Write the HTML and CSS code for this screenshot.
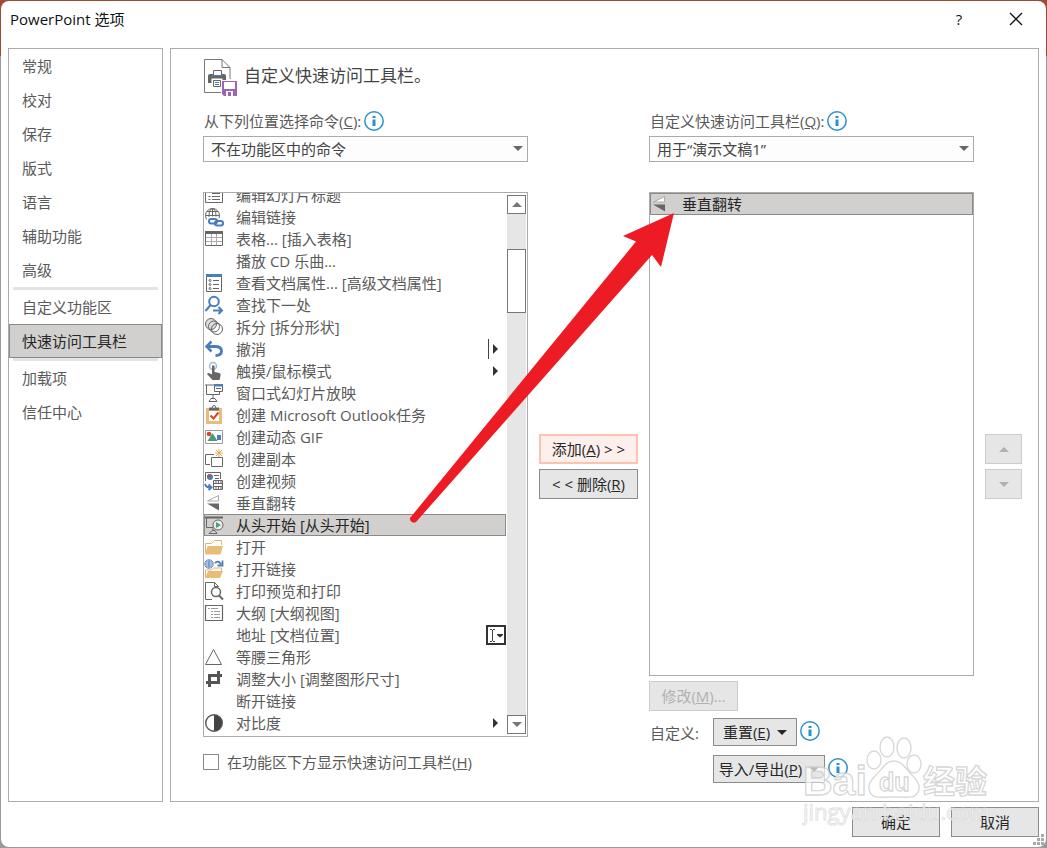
FILE: index.html
```html
<!DOCTYPE html>
<html lang="zh-CN">
<head>
    <meta charset="UTF-8">
    <meta name="viewport" content="width=device-width, initial-scale=1.0">
    <title>PowerPoint 选项</title>
    <link rel="stylesheet" href="styles.css">
</head>
<body>
    <div class="dialog">
        <header class="titlebar">
            <h1>PowerPoint 选项</h1>
            <button class="title-button" type="button" aria-label="帮助">?</button>
            <button class="title-button" type="button" aria-label="关闭">
                <svg width="14" height="14" viewBox="0 0 14 14"><path d="M1 1l12 12M13 1L1 13" stroke="#111" stroke-width="1.3"/></svg>
            </button>
        </header>

        <div class="content">
            <nav class="sidebar">
                <a href="#">常规</a>
                <a href="#">校对</a>
                <a href="#">保存</a>
                <a href="#">版式</a>
                <a href="#">语言</a>
                <a href="#">辅助功能</a>
                <a href="#">高级</a>
                <hr>
                <a href="#">自定义功能区</a>
                <a href="#" class="active">快速访问工具栏</a>
                <hr>
                <a href="#">加载项</a>
                <a href="#">信任中心</a>
            </nav>

            <main class="panel">
                <div class="panel-head">
                    <svg width="34" height="38" viewBox="0 0 34 38" fill="none">
                        <path d="M17 33.500H.5V.5H18l8 8V20" stroke="#777"/>
                        <path d="M18 .5v8h8" stroke="#777"/>
                        <path d="M4 17q0-2 2-2h14q2 0 2 2v7H4z" fill="#666"/>
                        <path d="M9.500 17v-5.500h8V17z" fill="#fff" stroke="#666"/>
                        <path d="M8 16.500h11" stroke="#4a7ebb"/>
                        <path d="M8.500 20.500h9v7h-9z" fill="#fff" stroke="#fff" stroke-width="2"/>
                        <path d="M9.500 21.500h7v6h-7z" fill="#fff" stroke="#666"/>
                        <path d="M11 23.500h4M11 25.500h4" stroke="#4a7ebb"/>
                        <path d="M17 21h17v17H17z" fill="#fff"/>
                        <path d="M18 22h15v15H20l-2-2z" fill="#9b64b8"/>
                        <path d="M20 23h11v7H20zM22 32h7v5h-7z" fill="#fff"/>
                        <path d="M24 33h3v4h-3z" fill="#9b64b8"/>
                    </svg>
                    <h2>自定义快速访问工具栏。</h2>
                </div>

                <div class="columns">
                    <div class="field">
                        <div class="field-label">
                            <label for="source">从下列位置选择命令(<u>C</u>):</label>
                            <svg class="info"><use href="#i-info"/></svg>
                        </div>
                        <div class="select">
                            <select id="source"><option>不在功能区中的命令</option></select>
                        </div>
                    </div>
                    <div class="field field-target">
                        <div class="field-label">
                            <label for="target">自定义快速访问工具栏(<u>Q</u>):</label>
                            <svg class="info"><use href="#i-info"/></svg>
                        </div>
                        <div class="select">
                            <select id="target"><option>用于“演示文稿1”</option></select>
                        </div>
                    </div>

                    <div class="source-col">
                        <div class="listbox">
                            <ul class="items scrolled" id="commands" role="listbox" aria-label="命令"></ul>
                            <div class="scrollbar">
                                <button type="button" aria-label="向上滚动"><i class="tri up"></i></button>
                                <div class="track"><div class="thumb"></div></div>
                                <button type="button" aria-label="向下滚动"><i class="tri down"></i></button>
                            </div>
                        </div>
                        <label class="check"><input type="checkbox"><span>在功能区下方显示快速访问工具栏(<u>H</u>)</span></label>
                    </div>

                    <div class="side">
                        <button class="btn primary" type="button">添加(<u>A</u>) &gt; &gt;</button>
                        <button class="btn" type="button">&lt; &lt; 删除(<u>R</u>)</button>
                    </div>

                    <div class="target-col">
                        <div class="listbox">
                            <ul class="items" role="listbox" aria-label="工具栏">
                                <li class="selected" role="option" aria-selected="true"><svg><use href="#i-flip"/></svg><span>垂直翻转</span></li>
                            </ul>
                        </div>
                        <button class="btn modify" type="button" disabled>修改(<u>M</u>)...</button>
                        <div class="custom">
                            <span class="custom-label">自定义:</span>
                            <button class="btn menu" type="button"><span>重置(<u>E</u>)</span><i class="tri down"></i></button>
                            <svg class="info"><use href="#i-info"/></svg>
                            <div class="export">
                                <button class="btn menu" type="button"><span>导入/导出(<u>P</u>)</span><i class="tri down"></i></button>
                                <svg class="info"><use href="#i-info"/></svg>
                            </div>
                        </div>
                    </div>

                    <div class="side">
                        <button class="btn" type="button" disabled aria-label="上移"><i class="tri up"></i></button>
                        <button class="btn" type="button" disabled aria-label="下移"><i class="tri down"></i></button>
                    </div>
                </div>
            </main>
        </div>

        <footer class="footer">
            <button class="btn" type="button">确定</button>
            <button class="btn" type="button">取消</button>
        </footer>

        <svg class="grip" width="11" height="11" viewBox="0 0 11 11"><path d="M8 0h3v3H8zM4 4h3v3H4zM8 4h3v3H8zM0 8h3v3H0zM4 8h3v3H4zM8 8h3v3H8z" fill="#aaa"/></svg>

        <!-- pointer from the command to its place in the toolbar -->
        <svg class="arrow" width="270" height="320" viewBox="0 0 270 320">
            <path d="M5 313L231 36.500 218 31l51-23-13 54-9-12L11 317a4 4 0 0 1-6-4z" fill="#ed1c24"/>
        </svg>

        <svg class="watermark" width="190" height="96" viewBox="0 0 190 96">
            <g fill="#fff" fill-opacity=".7" stroke="#c9c9c9" stroke-opacity=".75" stroke-width="1.300">
                <text x="1" y="62" class="wm-big">Bai</text>
                <ellipse cx="72" cy="27" rx="7" ry="9"/>
                <ellipse cx="85" cy="14" rx="7" ry="10"/>
                <ellipse cx="102" cy="15" rx="7" ry="10"/>
                <ellipse cx="112" cy="31" rx="7" ry="9"/>
                <path d="M92 28c9 0 12 9 18 14 6 6 9 11 6 17-3 7-10 5-24 5s-21 2-24-5c-3-6 0-11 6-17 6-5 9-14 18-14z"/>
                <text x="77" y="58" class="wm-du">du</text>
                <text x="121" y="60" class="wm-cn">经验</text>
            </g>
            <text x="1" y="87" class="wm-url" fill="#fff" fill-opacity=".8" stroke="#d4d4d4" stroke-opacity=".7">jingyan.baidu.com</text>
        </svg>
    </div>

    <svg class="sprite">
        <symbol id="i-info" viewBox="0 0 20 20">
            <circle cx="10" cy="10" r="9.200" fill="#fff" stroke="#2b90d0" stroke-width="1.500"/>
            <path d="M8.500 5h3v2h-3zM8.500 8.500h3V15h-3z" fill="#2b90d0" stroke="none"/>
        </symbol>
        <symbol id="i-title" viewBox="0 0 20 20">
            <path d="M1.500 5.500h17v12h-17zM8 8.500h8M8 11.500h8M8 14.500h8M4.500 11.500h2M4.500 14.500h2"/>
        </symbol>
        <symbol id="i-link" viewBox="0 0 20 20">
            <circle cx="8.500" cy="8.500" r="7"/><ellipse cx="8.500" cy="8.500" rx="3.500" ry="7"/><path d="M1.500 8.500h14M3 4.500h11M3 12.500h7M8.500 1.500v12"/>
            <g stroke="#fff" stroke-width="5"><rect x="5" y="12" width="8" height="4" rx="2"/><rect x="11" y="14" width="8" height="4" rx="2"/></g>
            <g stroke="#4a7ebb" stroke-width="2"><rect x="5" y="12" width="8" height="4.500" rx="2.200"/><rect x="11" y="14" width="8" height="4.500" rx="2.200"/></g>
        </symbol>
        <symbol id="i-table" viewBox="0 0 20 20">
            <path d="M7.500 4v12.500M12.500 4v12.500M1.500 8.500h17M1.500 12.500h17" stroke="#aaa"/><path d="M1.500 2.500h17v14h-17z"/><path d="M1 2h18v3H1z" fill="#666" stroke="none"/>
        </symbol>
        <symbol id="i-props" viewBox="0 0 20 20">
            <path d="M2.500 3v15.500h15V3" /><path d="M2 1h16v3H2z" fill="#4a7ebb" stroke="none"/>
            <path d="M9 7.500h6M9 11.500h6M9 15.500h6"/><circle cx="6" cy="7.500" r="1"/><circle cx="6" cy="11.500" r="1"/><circle cx="6" cy="15.500" r="1"/>
        </symbol>
        <symbol id="i-find" viewBox="0 0 20 20">
            <g stroke="#4a7ebb" stroke-width="2"><circle cx="10" cy="6.500" r="4.800"/><path d="M6.500 10L1.500 16M9 15.500h9M14.500 12l3.500 3.500-3.500 3.500"/></g>
        </symbol>
        <symbol id="i-split" viewBox="0 0 20 20">
            <circle cx="7" cy="7" r="5.500" fill="#ddd"/><circle cx="13" cy="12" r="5.500"/><circle cx="10" cy="9.500" r="5.500"/>
        </symbol>
        <symbol id="i-undo" viewBox="0 0 20 20">
            <path d="M3 7.500h8c4 0 6.500 1.500 6.500 4.500s-2.500 4.500-6 4.500" stroke="#4a7ebb" stroke-width="2.800"/><path d="M7.500 2.500L2.500 7.500l5 5" stroke="#4a7ebb" stroke-width="2.500"/>
        </symbol>
        <symbol id="i-touch" viewBox="0 0 20 20">
            <circle cx="9" cy="5" r="3.500" stroke="#9dbce0" stroke-width="1.500"/>
            <path d="M8 4.500h2.500V11l5 1q1.500.5 1 3l-1 4H8.500L3 13q1-1.500 3-.5l2 1z" fill="#666" stroke="none"/>
        </symbol>
        <symbol id="i-window" viewBox="0 0 20 20">
            <path d="M1 2h9M2.500 2v9.500h13V9M9 12v4M5 18.500l2-3h4l2 3z"/><path d="M10.500 1.500h8v7h-8z" fill="#fff"/><path d="M12 5.500h5"/><path d="M10 1h9v2.500h-9z" fill="#4a7ebb" stroke="none"/>
        </symbol>
        <symbol id="i-task" viewBox="0 0 20 20">
            <path d="M3.500 4.500h13v13h-13z" stroke="#e9bd78" stroke-width="3"/><path d="M5 2.500h10v3H5z" fill="#666" stroke="none"/><circle cx="10" cy="2" r="1.500" fill="#fff"/>
            <path d="M6.500 10.500l3 3 5-6" stroke="#d24726" stroke-width="2"/>
        </symbol>
        <symbol id="i-gif" viewBox="0 0 20 20">
            <path d="M1.500 3.500h17v13h-17z" stroke="#999"/><circle cx="5" cy="7" r="2.300" fill="#d24726" stroke="none"/>
            <path d="M3.500 14l5-8 5 8z" fill="#4c9a7c" stroke="none"/><path d="M13 8h4v5h-4z" fill="#4a7ebb" stroke="none"/>
        </symbol>
        <symbol id="i-copy" viewBox="0 0 20 20">
            <path d="M6 15.500H1.500v-10H10"/><path d="M7.500 8.500h11v9h-11z" fill="#fff"/><path d="M15 0v8M11 4h8M12 1l6 6M18 1l-6 6" stroke="#e3a94f"/>
        </symbol>
        <symbol id="i-video" viewBox="0 0 20 20">
            <path d="M1.500 10V1.500h15V8M10 4.500h5M11 7.500h4"/><circle cx="6" cy="6" r="3" fill="#4a7ebb" stroke="none"/><path d="M6 6V3a3 3 0 0 0-3 3z" fill="#d24726" stroke="none"/>
            <path d="M1 13q1 3.500 5 3.500M4.500 13.500l3 3-3 2.500" stroke="#4a7ebb" stroke-width="2"/>
            <path d="M9.500 9.500h9v9h-9z" fill="#fff"/><path d="M9 12.500h10M9 15.500h10"/><path d="M9 11h10M9 17h10" stroke-width="2" stroke-dasharray="1 1.500"/>
        </symbol>
        <symbol id="i-flip" viewBox="0 0 20 20">
            <path d="M14.500 2.500V8h-11z" fill="#fff" stroke="#aaa"/><path d="M3 10.500h12V17.500z" fill="#666" stroke="none"/>
        </symbol>
        <symbol id="i-start" viewBox="0 0 20 20">
            <path d="M0 2.500h19" stroke-width="2"/><path d="M2.500 3v9.500H9M9 13v3M5 18.500l3-3h3l2 3z"/>
            <circle cx="14" cy="10" r="5" fill="#eee"/><path d="M12 7l5 3-5 3z" fill="#4c9a7c" stroke="none"/>
        </symbol>
        <symbol id="i-open" viewBox="0 0 20 20">
            <path d="M1.500 16V6.500h6l3-3h7V8" fill="#fff" stroke="#e3b46a"/><path d="M3.500 9H19l-2.500 8.500H1z" fill="#e9bd78" stroke="none"/>
        </symbol>
        <symbol id="i-openlink" viewBox="0 0 20 20">
            <path d="M1.500 18v-7h6l2-2h8v4" stroke="#e3b46a"/><path d="M4 12h15l-3 7H1z" fill="#e9bd78" stroke="none"/>
            <g stroke="#4a7ebb"><circle cx="5" cy="5" r="4.200" fill="#fff"/><path d="M1 5h8M5 1v8M2 3h6M2 7h6"/><path d="M11 4q3-3 6 1M18.500 1.500v5h-5" stroke-width="1.800"/></g>
        </symbol>
        <symbol id="i-preview" viewBox="0 0 20 20">
            <path d="M8 18.500H1.500v-17h9l4 4M10.500 1.500v4h4"/><circle cx="12" cy="11" r="4.500" fill="#fff" stroke-width="1.500"/><path d="M15 14.500l4 4" stroke-width="2"/>
        </symbol>
        <symbol id="i-outline" viewBox="0 0 20 20">
            <path d="M1.500 2.500h17v15h-17z" stroke-width="1.200"/><path d="M4 5.500h2M7 5.500h7M7 8.500h2M10 8.500h6M7 11.500h2M10 11.500h6M7 14.500h2M10 14.500h6" stroke="#999"/>
        </symbol>
        <symbol id="i-triangle" viewBox="0 0 20 20"><path d="M1.500 17.500h16L9.500 2.500z"/></symbol>
        <symbol id="i-crop" viewBox="0 0 20 20"><path d="M5.500 18V6.500H18M2 13.500h12.500V2" stroke="#555" stroke-width="3"/></symbol>
        <symbol id="i-contrast" viewBox="0 0 20 20"><circle cx="10" cy="10" r="8.300" stroke="#555" stroke-width="1.400"/><path d="M10 2a8 8 0 0 1 0 16z" fill="#444" stroke="none"/></symbol>
        <symbol id="i-combo" viewBox="0 0 20 20">
            <path d="M1 1h18v18H1z" fill="#fff" stroke="#333" stroke-width="2"/><path d="M4 4.500h2M7 4.500h2M4 16.500h2M7 16.500h2M6.500 5v11" stroke="#444"/><path d="M11 9h6v1l-3 2.500L11 10z" fill="#333" stroke="none"/>
        </symbol>
    </svg>

    <script>
        // [icon, text, trailing control]
        const commands = [
            ['title', '编辑幻灯片标题'],
            ['link', '编辑链接'],
            ['table', '表格... [插入表格]'],
            ['', '播放 CD 乐曲...'],
            ['props', '查看文档属性... [高级文档属性]'],
            ['find', '查找下一处'],
            ['split', '拆分 [拆分形状]'],
            ['undo', '撤消', 'split-menu'],
            ['touch', '触摸/鼠标模式', 'menu'],
            ['window', '窗口式幻灯片放映'],
            ['task', '创建 Microsoft Outlook任务'],
            ['gif', '创建动态 GIF'],
            ['copy', '创建副本'],
            ['video', '创建视频'],
            ['flip', '垂直翻转'],
            ['start', '从头开始 [从头开始]'],
            ['open', '打开'],
            ['openlink', '打开链接'],
            ['preview', '打印预览和打印'],
            ['outline', '大纲 [大纲视图]'],
            ['', '地址 [文档位置]', 'combo'],
            ['triangle', '等腰三角形'],
            ['crop', '调整大小 [调整图形尺寸]'],
            ['', '断开链接'],
            ['contrast', '对比度', 'menu']
        ];

        const tails = {
            'menu': '<i class="tri right"></i>',
            'split-menu': '<b class="bar"></b><i class="tri right"></i>',
            'combo': '<svg class="combo"><use href="#i-combo"/></svg>'
        };

        document.getElementById('commands').innerHTML = commands.map(([icon, text, tail]) => `
            <li role="option" class="${icon === 'start' ? 'selected' : ''}">
                <svg>${icon ? `<use href="#i-${icon}"/>` : ''}</svg>
                <span>${text}</span>${tail ? tails[tail] : ''}
            </li>
        `).join('');
    </script>
</body>
</html>
```
FILE: styles.css
```css
* {
    box-sizing: border-box;
}

body {
    margin: 0;
    padding: 1px;
    min-height: 100vh;
    background: linear-gradient(#a04a33 56px, #9a9a9a 56px);
    color: #5a5a5a;
    font: 15px/20px "Open Sans", "Noto Sans CJK SC", sans-serif;
}

.dialog {
    position: relative;
    display: flex;
    flex-direction: column;
    min-height: calc(100vh - 2px);
    padding: 0 7px;
    background-color: #fff;
    border-radius: 8px;
}

button,
select {
    font: inherit;
    color: #262626;
}

.titlebar {
    display: flex;
    align-items: center;
    height: 47px;
    padding-bottom: 12px;
}

.titlebar h1 {
    flex: 1;
    margin: 0;
    padding-left: 2px;
    font-size: 15px;
    font-weight: 400;
    color: #111;
}

.title-button {
    display: flex;
    align-items: center;
    justify-content: center;
    width: 46px;
    height: 30px;
    margin-left: 11px;
    padding: 0;
    border: none;
    background: none;
    color: #111;
}

.content {
    display: flex;
    flex: 1;
    gap: 7px;
}

.sidebar,
.panel {
    border: 1px solid #ababab;
}

.sidebar {
    width: 155px;
}

.sidebar a {
    display: block;
    height: 34px;
    padding: 0 13px;
    line-height: 34px;
    color: inherit;
    text-decoration: none;
}

.sidebar a.active {
    padding: 0 12px;
    border: 1px solid #8a8b86;
    background-color: #d2d0ce;
    line-height: 32px;
    color: #262626;
}

.sidebar hr {
    height: 3px;
    margin: 0 4px;
    border: none;
    background-color: #e4e4e4;
}

.panel {
    display: flex;
    flex-direction: column;
    flex: 1;
    padding: 10px 16px 18px 32px;
}

.panel-head {
    display: flex;
    gap: 6px;
    height: 50px;
    padding-left: 1px;
}

.panel-head h2 {
    margin: 0;
    font-size: 17px;
    font-weight: 400;
    line-height: 34px;
    color: #444;
}

.columns {
    display: grid;
    grid-template-columns: minmax(0, 1fr) 99px minmax(0, 1fr) 37px;
    grid-template-rows: 53px 1fr;
    column-gap: 11px;
    row-gap: 30px;
    flex: 1;
}

.field-target {
    grid-column: 3 / 5;
    margin-right: 48px;
}

.field-label {
    display: flex;
    align-items: center;
    gap: 3px;
    height: 27px;
    padding-bottom: 3px;
}

.info {
    width: 20px;
    height: 20px;
    flex: none;
}

.field-label label {
    padding-left: 1px;
}

.select {
    position: relative;
    height: 26px;
}

.select select {
    width: 100%;
    height: 26px;
    padding: 0 7px;
    border: 1px solid #ababab;
    border-radius: 0;
    background-color: #fdfdfd;
    appearance: none;
    color: #444;
}

.select::after {
    content: "";
    position: absolute;
    top: 10px;
    right: 5px;
    border: 5px solid transparent;
    border-top-color: #666;
    border-bottom: none;
}

.source-col,
.target-col {
    display: flex;
    flex-direction: column;
}

.listbox {
    display: flex;
    flex: 1;
    border: 1px solid #ababab;
    overflow: hidden;
}

.items {
    flex: 1;
    margin: 0;
    padding: 0;
    list-style: none;
}

.items.scrolled {
    height: 0;
    margin-top: -9px;
}

.items li {
    display: flex;
    align-items: center;
    gap: 12px;
    height: 22px;
    padding-right: 8px;
    white-space: nowrap;
}

.items li span {
    flex: 1;
}

.items li svg {
    flex: none;
    width: 20px;
    height: 20px;
    fill: none;
    stroke: #666;
}

.items li.selected {
    background-color: #d2d0ce;
    outline: 1px solid #8a8b86;
    outline-offset: -1px;
    color: #262626;
}

.items .bar {
    width: 1px;
    height: 20px;
    margin-right: -8px;
    background-color: #444;
}

.items .combo {
    margin-right: -8px;
}

.scrollbar {
    display: flex;
    flex-direction: column;
    width: 19px;
    margin: 2px 1px;
    background-color: #e6e6e6;
}

.scrollbar button {
    display: flex;
    align-items: center;
    justify-content: center;
    height: 19px;
    padding: 0;
    border: 1px solid #777;
    background-color: #fff;
    color: #777;
}

.track {
    flex: 1;
    padding-top: 35px;
}

.thumb {
    height: 64px;
    border: 1px solid #777;
    background-color: #fff;
}

.tri {
    flex: none;
    border: 5px solid transparent;
}

.tri.up {
    border-top: none;
    border-bottom-color: currentColor;
}

.tri.down {
    border-bottom: none;
    border-top-color: currentColor;
}

.tri.right {
    border-right: none;
    border-left-color: #333;
}

.check {
    display: flex;
    gap: 8px;
    height: 46px;
    padding-top: 15px;
}

.check input {
    width: 16px;
    height: 16px;
    margin: 2px 0;
    border: 1px solid #8a8a8a;
    background-color: #fff;
    appearance: none;
}

.side {
    display: flex;
    flex-direction: column;
    justify-content: center;
    gap: 5px;
    padding-bottom: 42px;
}

.btn {
    display: flex;
    align-items: center;
    justify-content: center;
    height: 30px;
    padding: 0;
    border: 1px solid #8c8c8c;
    background-color: #e6e6e6;
    white-space: pre;
}

.btn.primary {
    border: 2px solid #fcc4b0;
    background-color: #fdf0ec;
}

.btn:disabled {
    border-color: #ccc;
    color: #b1b1b1;
}

.btn.modify {
    width: 89px;
    margin: 5px 0 7px;
}

.custom {
    display: grid;
    grid-template-columns: 61px auto 1fr;
    gap: 9px 3px;
}

.custom-label {
    padding: 5px 0 0 1px;
}

.custom .info {
    margin-top: 3px;
}

.btn.menu {
    width: 84px;
    height: 28px;
    gap: 7px;
}

.export {
    display: flex;
    gap: 3px;
    grid-column: 2 / 4;
}

.export .btn.menu {
    width: 112px;
}

.footer {
    display: flex;
    justify-content: flex-end;
    gap: 11px;
    height: 45px;
    padding-top: 5px;
}

.footer .btn {
    width: 88px;
}

.grip {
    position: absolute;
    right: 2px;
    bottom: 2px;
}

.arrow {
    position: absolute;
    left: 404px;
    top: 204px;
    pointer-events: none;
}

.watermark {
    position: absolute;
    right: 54px;
    bottom: 18px;
    pointer-events: none;
}

.wm-big {
    font: bold 41px "Liberation Sans", sans-serif;
}

.wm-du {
    font: bold 25px "Liberation Sans", sans-serif;
}

.wm-cn {
    font: bold 32px "Noto Sans CJK SC", sans-serif;
}

.wm-url {
    font: 22px "Open Sans", sans-serif;
}

.sprite {
    position: absolute;
    width: 0;
    height: 0;
}
```
